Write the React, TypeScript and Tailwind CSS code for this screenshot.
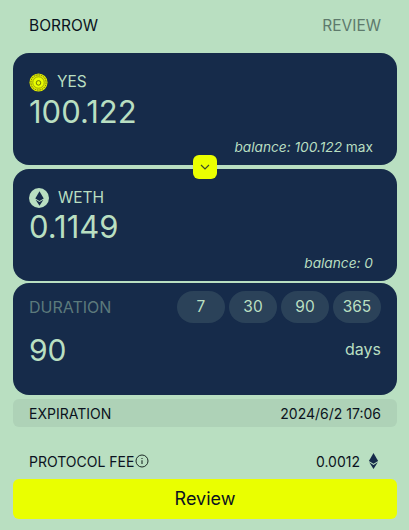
const durations = ["7", "30", "90", "365"];

function EthGlyph({ className }: { className?: string }) {
  return (
    <svg viewBox="0 0 16 26" className={className} fill="currentColor">
      <path d="M8 0 L15.5 13 L8 17.5 L0.5 13 Z" />
      <path d="M8 19.4 L15 15 L8 26 L1 15 Z" />
    </svg>
  );
}

function YesIcon() {
  return (
    <svg viewBox="0 0 20 20" className="h-[19px] w-[19px]">
      <circle cx="10" cy="10" r="9.5" fill="#dfeb00" />
      <circle cx="10" cy="10" r="8" fill="none" stroke="#5f6812" strokeWidth="1" strokeDasharray="1.5 1" />
      <circle cx="10" cy="10" r="6" fill="#eaff00" stroke="#7a8410" strokeWidth="0.7" />
      <circle cx="10" cy="10.4" r="2.4" fill="none" stroke="#59620f" strokeWidth="0.9" />
    </svg>
  );
}

function App() {
  return (
    <div className="h-[530px] w-[409px] overflow-hidden bg-[#b9dfc1] pl-[13px] pr-[12px] font-['Inter',sans-serif] text-[#0b1220]">
      <div className="flex h-[53px] items-center justify-between px-4 pb-[2px] text-[15.5px]">
        <span>BORROW</span>
        <span className="text-[#5e7a6c]">REVIEW</span>
      </div>

      <div className="relative flex flex-col gap-1">
        <section className="flex h-28 flex-col rounded-2xl bg-[#162b4a] px-4 pt-[19px] text-[#b9dfc1]">
          <div className="flex h-[20px] items-center gap-[9px] text-[15.5px]">
            <YesIcon />
            <span>YES</span>
          </div>
          <div className="mt-[2px] text-[31px] leading-[36px]">100.122</div>
          <div className="mt-2 self-end pr-2 text-[13.7px] leading-[18px]">
            <i>balance: 100.122</i> max
          </div>
        </section>

        <button className="absolute left-[180px] top-[102px] flex h-6 w-6 items-center justify-center rounded-md bg-[#eaff00]">
          <svg viewBox="0 0 12 12" className="h-3 w-3" fill="none" stroke="#3b4a2a" strokeWidth="1.2">
            <path d="M2 4 L6 8 L10 4" />
          </svg>
        </button>

        <section className="flex h-28 flex-col rounded-2xl bg-[#162b4a] px-4 pt-[19px] text-[#b9dfc1]">
          <div className="flex h-[20px] items-center gap-[9px] text-[15.5px]">
            <span className="flex h-5 w-5 items-center justify-center rounded-full bg-[#b9dfc1]">
              <EthGlyph className="h-[15px] w-[9px] text-[#162b4a]" />
            </span>
            <span>WETH</span>
          </div>
          <div className="mt-[1px] text-[31px] leading-[36px]">0.1149</div>
          <div className="mt-[9px] self-end pr-2 text-[13.7px] italic leading-[18px]">balance: 0</div>
        </section>
      </div>

      <section className="mt-[2px] flex h-28 flex-col rounded-2xl bg-[#162b4a] px-4 pt-2 text-[#b9dfc1]">
        <div className="flex items-center justify-between">
          <span className="text-[16px] text-[#5c7a7c]">DURATION</span>
          <div className="flex gap-1">
            {durations.map((d) => (
              <span
                key={d}
                className="flex h-8 w-12 items-center justify-center rounded-full bg-[#2b4259] text-[15.5px]"
              >
                {d}
              </span>
            ))}
          </div>
        </div>
        <div className="mt-[9px] flex items-start justify-between">
          <span className="text-[30px] leading-[36px]">90</span>
          <span className="mt-[5px] text-[16px]">days</span>
        </div>
      </section>

      <div className="mt-1 flex h-7 items-center justify-between rounded-md bg-[#aed2b7] px-4 text-[14px]">
        <span>EXPIRATION</span>
        <span>2024/6/2 17:06</span>
      </div>

      <div className="mt-5 flex h-7 items-center justify-between pl-4 pr-[18px] text-[14px]">
        <span className="flex items-center gap-[1px]">
          PROTOCOL FEE
          <svg viewBox="0 0 14 14" className="h-[14px] w-[14px]" fill="none" stroke="#1c2a26">
            <circle cx="7" cy="7" r="6" strokeWidth="1" />
            <path d="M7 6.2 V10 M7 4 V5" strokeWidth="1.1" />
          </svg>
        </span>
        <span className="flex items-center gap-2">
          0.0012
          <EthGlyph className="h-[16px] w-[11px] text-[#162b4a]" />
        </span>
      </div>

      <button className="mt-1 flex h-10 w-full items-center justify-center rounded-md bg-[#eaff00] pb-[2px] text-[18px] text-[#0b1220]">
        Review
      </button>
    </div>
  );
}

export default App;
